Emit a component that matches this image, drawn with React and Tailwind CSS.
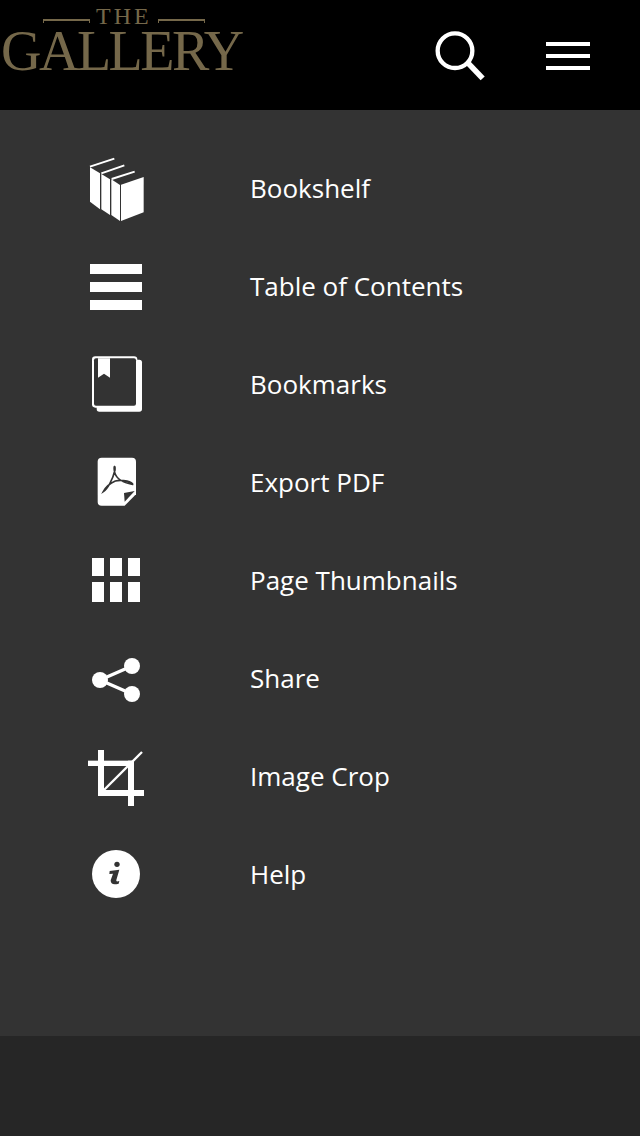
import React from 'react'

const DARK = '#333333'

function Icon({ box, children }) {
  return (
    <svg width="64" height="64" viewBox={box} fill="#fff" className="shrink-0">
      {children}
    </svg>
  )
}

function BookshelfIcon() {
  return (
    <Icon box="12 21 192 192">
      <polygon points="30,52 60,70 60,178 30,155" />
      <polygon points="64,72 90,88 90,195 64,178" />
      <polygon points="94,88 120,105 120,213 94,195" />
      <polygon points="123,104 191,81 191,187 123,213" />
      <path d="M30 50 103 26M64 70 133 46M95 87 164 65" stroke="#fff" strokeWidth="6" />
    </Icon>
  )
}

function ContentsIcon() {
  return (
    <Icon box="12 315 192 192">
      <rect x="30" y="342" width="156" height="30" />
      <rect x="30" y="396" width="156" height="30" />
      <rect x="30" y="450" width="156" height="30" />
    </Icon>
  )
}

function BookmarksIcon() {
  return (
    <Icon box="12 24 192 192">
      <rect x="50" y="44" width="136" height="156" rx="8" />
      <rect x="36" y="34" width="136" height="154" rx="10" />
      <rect x="42" y="40" width="126" height="142" rx="6" fill={DARK} />
      <polygon points="54,40 90,40 90,98 72,86 54,98" />
    </Icon>
  )
}

function PdfIcon() {
  return (
    <Icon box="12 318 192 192">
      <path d="M65 338H156Q168 338 168 350V448L134 482H65Q53 482 53 470V350Q53 338 65 338Z" />
      <polygon points="132,444 164,438 134,470" fill={DARK} />
      <path
        d="M70 440C82 432 98 405 105 375C106 358 100 362 104 382C108 398 125 412 158 418C160 412 128 402 106 408C92 414 78 424 70 440Z"
        fill="none"
        stroke={DARK}
        strokeWidth="5"
      />
    </Icon>
  )
}

function ThumbnailsIcon() {
  return (
    <Icon box="12 -3 192 192">
      <rect x="36" y="24" width="36" height="54" />
      <rect x="90" y="24" width="36" height="54" />
      <rect x="144" y="24" width="36" height="54" />
      <rect x="36" y="96" width="36" height="60" />
      <rect x="90" y="96" width="36" height="60" />
      <rect x="144" y="96" width="36" height="60" />
    </Icon>
  )
}

function ShareIcon() {
  return (
    <Icon box="12 291 192 192">
      <circle cx="156" cy="348" r="24" />
      <circle cx="60" cy="390" r="24" />
      <circle cx="156" cy="432" r="24" />
      <path d="M156 348 60 390 156 432" fill="none" stroke="#fff" strokeWidth="10" />
    </Icon>
  )
}

function CropIcon() {
  return (
    <Icon box="12 15 192 192">
      <rect x="24" y="62" width="138" height="16" />
      <rect x="54" y="30" width="18" height="138" />
      <rect x="54" y="150" width="138" height="18" />
      <rect x="144" y="62" width="18" height="136" />
      <path d="M72 150 186 36" stroke="#fff" strokeWidth="7" />
    </Icon>
  )
}

function HelpIcon() {
  return (
    <Icon box="12 309 192 192">
      <circle cx="108" cy="402" r="72" />
      <circle cx="111" cy="373" r="8" fill={DARK} />
      <path
        d="M89 393 118 389 109 420Q107 427 118 423L116 431Q92 438 92 421L99 401 88 402Z"
        fill={DARK}
      />
    </Icon>
  )
}

const items = [
  { label: 'Bookshelf', icon: BookshelfIcon },
  { label: 'Table of Contents', icon: ContentsIcon },
  { label: 'Bookmarks', icon: BookmarksIcon },
  { label: 'Export PDF', icon: PdfIcon },
  { label: 'Page Thumbnails', icon: ThumbnailsIcon },
  { label: 'Share', icon: ShareIcon },
  { label: 'Image Crop', icon: CropIcon },
  { label: 'Help', icon: HelpIcon },
]

function Logo() {
  return (
    <div className="w-[244px] pt-[4px] font-['Liberation_Serif',serif] text-[#75684a]">
      <div className="flex h-[24px] items-center pl-[43px]">
        <span className="mt-[10px] h-[4px] w-[47px] border-t-2 border-l border-r border-[#75684a]" />
        <span className="mx-[6px] text-[24px] leading-[24px] tracking-[3px]">THE</span>
        <span className="mt-[10px] h-[4px] w-[47px] border-t-2 border-l border-r border-[#75684a]" />
      </div>
      <div className="pl-[1px] text-[56px] leading-[46px] tracking-[-2.5px] whitespace-nowrap">GALLERY</div>
    </div>
  )
}

export default function App() {
  return (
    <div className="flex min-h-[1136px] w-[640px] flex-col bg-[#262626] font-['Open_Sans',sans-serif]">
      <header className="flex h-[110px] items-start justify-between bg-black pr-[50px]">
        <Logo />
        <div className="flex items-center gap-[58px] pt-[30px]">
          <svg width="54" height="54" viewBox="42 30 162 162" fill="none" stroke="#fff">
            <circle cx="105" cy="92" r="52" strokeWidth="13" />
            <path d="M145 130 188 175" strokeWidth="17" />
          </svg>
          <div className="mb-[2px] flex w-[44px] flex-col gap-[8px]">
            <div className="h-[4px] bg-white" />
            <div className="h-[4px] bg-white" />
            <div className="h-[4px] bg-white" />
          </div>
        </div>
      </header>

      <nav className="h-[926px] bg-[#333333] pt-[30px]">
        {items.map(({ label, icon: ItemIcon }) => (
          <div key={label} className="flex h-[98px] items-center pl-[84px]">
            <ItemIcon />
            <span className="mb-[2px] ml-[102px] text-[26px] text-white">{label}</span>
          </div>
        ))}
      </nav>
    </div>
  )
}
